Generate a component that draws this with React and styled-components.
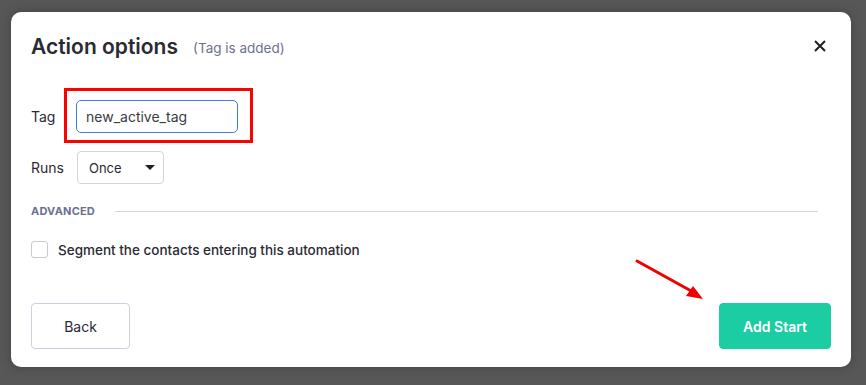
import React from 'react';
import styled, { createGlobalStyle } from 'styled-components';

const GlobalStyle = createGlobalStyle`
  html, body {
    margin: 0;
    padding: 0;
    background: #575757;
  }
  body {
    font-family: Inter, "Noto Sans", Arial, sans-serif;
    color: #2a2a33;
  }
`;

const Backdrop = styled.div`
  width: 866px;
  height: 385px;
  padding: 12px 15px 18px 11px;
  box-sizing: border-box;
  background: #575757;
`;

const Modal = styled.div`
  position: relative;
  height: 355px;
  background: #fff;
  border-radius: 10px;
  box-shadow: 0 0 6px 3px rgba(70, 70, 70, 0.6);
  padding: 18px 20px 18px 20px;
  box-sizing: border-box;
  display: flex;
  flex-direction: column;
`;

const Header = styled.div`
  display: flex;
  align-items: center;
  height: 28px;
  margin-top: 2px;
`;

const Title = styled.h2`
  margin: 0;
  font-size: 21px;
  font-weight: 600;
  color: #2a2a33;
`;

const Subtitle = styled.span`
  margin-left: 15px;
  margin-top: 3px;
  font-size: 13.5px;
  color: #6d7190;
`;

const CloseButton = styled.button`
  margin-left: auto;
  margin-right: 3px;
  border: none;
  background: none;
  padding: 0;
  width: 16px;
  height: 16px;
  display: flex;
  align-items: center;
  justify-content: center;
  cursor: pointer;
`;

const Form = styled.div`
  display: grid;
  grid-template-columns: 45px auto;
  align-items: center;
  row-gap: 18px;
  margin-top: 40px;
  justify-content: start;
`;

const Label = styled.label`
  font-size: 14px;
  color: #2a2a33;
`;

const Highlight = styled.div`
  position: relative;
  width: 162px;
  &::after {
    content: '';
    position: absolute;
    left: -12px;
    right: -15px;
    top: -12px;
    bottom: -10px;
    border: 3px solid #ff0000;
    pointer-events: none;
  }
`;

const TextInput = styled.input`
  width: 162px;
  height: 33px;
  box-sizing: border-box;
  border: 1px solid #3f7be6;
  border-radius: 5px;
  padding: 0 9px;
  font-family: inherit;
  font-size: 14px;
  color: #3a3a42;
  outline: none;
`;

const Select = styled.div`
  width: 87px;
  height: 33px;
  box-sizing: border-box;
  border: 1px solid #d3d3da;
  border-radius: 4px;
  padding: 0 8px 0 11px;
  display: flex;
  align-items: center;
  justify-content: space-between;
  font-size: 13px;
  color: #2a2a33;
  margin-left: 1px;
`;

const Caret = styled.span`
  width: 0;
  height: 0;
  border-left: 5px solid transparent;
  border-right: 5px solid transparent;
  border-top: 5px solid #1f1f26;
`;

const Divider = styled.div`
  display: flex;
  align-items: center;
  gap: 20px;
  margin-top: 20px;
  padding-right: 13px;
  font-size: 11px;
  font-weight: 700;
  color: #6b7090;
  letter-spacing: 0.2px;

  &::after {
    content: '';
    flex: 1;
    height: 1px;
    background: #d5d5e0;
  }
`;

const CheckRow = styled.label`
  display: flex;
  align-items: center;
  gap: 10px;
  margin-top: 23px;
  font-size: 13.5px;
  font-weight: 500;
  color: #2a2a33;
`;

const Box = styled.span`
  width: 17px;
  height: 17px;
  box-sizing: border-box;
  border: 1px solid #c9c9d2;
  border-radius: 3px;
`;

const Footer = styled.div`
  margin-top: auto;
  display: flex;
  justify-content: space-between;
  align-items: center;
`;

const Button = styled.button`
  height: 46px;
  width: ${p => p.$width}px;
  box-sizing: border-box;
  border-radius: 4px;
  font-family: inherit;
  font-size: 14px;
  font-weight: ${p => (p.$primary ? 600 : 400)};
  color: ${p => (p.$primary ? '#fff' : '#2a2a33')};
  background: ${p => (p.$primary ? '#1ccca3' : '#fff')};
  border: 1px solid ${p => (p.$primary ? '#1ccca3' : '#ccd0e0')};
  cursor: pointer;
`;

const Arrow = styled.svg`
  position: absolute;
  left: 620px;
  top: 243px;
  pointer-events: none;
`;

export default function App() {
  return (
    <>
      <GlobalStyle />
      <Backdrop>
        <Modal>
          <Header>
            <Title>Action options</Title>
            <Subtitle>(Tag is added)</Subtitle>
            <CloseButton aria-label="Close">
              <svg width="12" height="12" viewBox="0 0 12 12">
                <path d="M1 1 L11 11 M11 1 L1 11" stroke="#1f1f26" strokeWidth="2" />
              </svg>
            </CloseButton>
          </Header>

          <Form>
            <Label>Tag</Label>
            <Highlight>
              <TextInput defaultValue="new_active_tag" />
            </Highlight>
            <Label>Runs</Label>
            <Select>
              <span>Once</span>
              <Caret />
            </Select>
          </Form>

          <Divider>ADVANCED</Divider>

          <CheckRow>
            <Box />
            Segment the contacts entering this automation
          </CheckRow>

          <Footer>
            <Button $width={99}>Back</Button>
            <Button $width={112} $primary>Add Start</Button>
          </Footer>

          <Arrow width="80" height="50" viewBox="0 0 80 50">
            <path d="M6 6 L62 37" stroke="#f00000" strokeWidth="3" strokeLinecap="round" />
            <path d="M72 44 L55 41 L62 31 Z" fill="#f00000" />
          </Arrow>
        </Modal>
      </Backdrop>
    </>
  );
}
